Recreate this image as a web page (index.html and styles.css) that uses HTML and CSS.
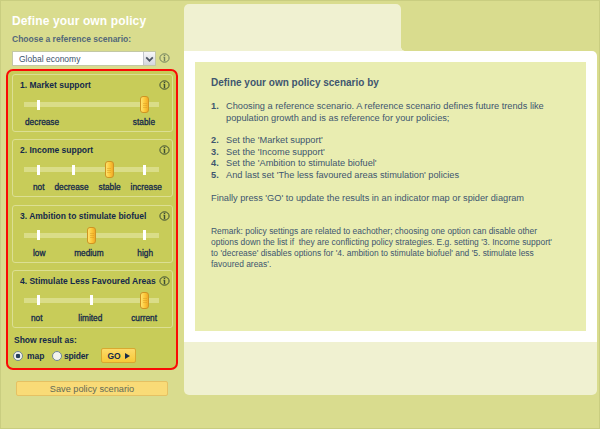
FILE: index.html
```html
<!DOCTYPE html>
<html lang="en">
<head>
<meta charset="utf-8">
<title>Define your own policy</title>
<link rel="stylesheet" href="styles.css">
</head>
<body>
<svg class="defs" aria-hidden="true">
  <symbol id="info" viewBox="0 0 11 10">
    <ellipse cx="5.5" cy="5" rx="4.6" ry="4.2" fill="none" stroke="currentColor" stroke-width="1"/>
    <path d="M4.8 1.8h1.4v1.2H4.8zM4.3 3.8h1.9v4.4H4.8V4.6h-.5z" fill="currentColor"/>
  </symbol>
</svg>
<div class="app">
  <aside class="sidebar">
    <h1>Define your own policy</h1>
    <p class="choose">Choose a reference scenario:</p>
    <div class="select-row">
      <div class="select"><span>Global economy</span><i><svg viewBox="0 0 10 12"><path d="M2 4.5l3 3 3-3" fill="none" stroke="#4d5665" stroke-width="1.6"/></svg></i></div>
      <svg class="info pale"><use href="#info"/></svg>
    </div>
    <form class="policies">
      <section class="group">
        <header><h2>1. Market support</h2><svg class="info"><use href="#info"/></svg></header>
        <div class="track"><b></b><b class="thumb"></b></div>
        <div class="labels l-market"><span>decrease</span><span>stable</span></div>
      </section>
      <section class="group">
        <header><h2>2. Income support</h2><svg class="info"><use href="#info"/></svg></header>
        <div class="track"><b></b><b></b><b class="thumb"></b><b></b></div>
        <div class="labels l-income"><span>not</span><span>decrease</span><span>stable</span><span>increase</span></div>
      </section>
      <section class="group">
        <header><h2>3. Ambition to stimulate biofuel</h2><svg class="info"><use href="#info"/></svg></header>
        <div class="track"><b></b><b class="thumb"></b><b></b></div>
        <div class="labels l-biofuel"><span>low</span><span>medium</span><span>high</span></div>
      </section>
      <section class="group">
        <header><h2>4. Stimulate Less Favoured Areas</h2><svg class="info"><use href="#info"/></svg></header>
        <div class="track"><b></b><b></b><b class="thumb"></b></div>
        <div class="labels l-areas"><span>not</span><span>limited</span><span>current</span></div>
      </section>
      <p class="show">Show result as:</p>
      <div class="result-row">
        <i class="radio on"></i><span class="map">map</span>
        <i class="radio"></i><span class="spider">spider</span>
        <div class="go"><span>GO</span><svg viewBox="0 0 5 6"><path d="M0 0l5 3-5 3z" fill="#1a2c48"/></svg></div>
      </div>
    </form>
    <div class="save">Save policy scenario</div>
  </aside>
  <main>
    <div class="tab"></div>
    <div class="panel">
      <article>
        <h3>Define your own policy scenario by</h3>
        <ol>
          <li class="first"><b>1.</b><span>Choosing a reference scenario. A reference scenario defines future trends like<br>population growth and is as reference for your policies;</span></li>
          <li><b>2.</b><span>Set the 'Market support'</span></li>
          <li><b>3.</b><span>Set the 'Income support'</span></li>
          <li><b>4.</b><span>Set the 'Ambition to stimulate biofuel'</span></li>
          <li><b>5.</b><span>And last set 'The less favoured areas stimulation' policies</span></li>
        </ol>
        <p class="finally">Finally press 'GO' to update the results in an indicator map or spider diagram</p>
        <p class="remark">Remark: policy settings are related to eachother; choosing one option can disable other<br>options down the list if &nbsp;they are conflicting policy strategies. E.g. setting '3. Income support'<br>to 'decrease' disables options for '4. ambition to stimulate biofuel' and '5. stimulate less<br>favoured areas'.</p>
      </article>
    </div>
    <div class="foot"></div>
  </main>
</div>
</body>
</html>
```

FILE: styles.css
```css
* { box-sizing: border-box; margin: 0; padding: 0; }
body { width: 600px; height: 429px; overflow: hidden; font-family: "Liberation Sans", Arial, sans-serif; }
.defs { display: none; }
.app { display: flex; width: 600px; height: 429px; background: #d9dc8e; border: 1px solid #c9cd80; }
.sidebar { width: 183px; padding-left: 5px; white-space: nowrap; }
h1 { font-size: 12px; line-height: 14px; margin: 13px 0 0 6px; color: #fff; letter-spacing: 0.13px; }
.choose { font-size: 8.5px; line-height: 10px; font-weight: bold; margin: 6px 0 0 6px; color: #53687a; }
.select-row { display: flex; align-items: center; height: 16px; margin: 6px 0 0 6px; }
.select { display: flex; width: 144px; height: 15px; background: #fff; border: 1px solid #c3c8a5; font-size: 8.5px; line-height: 14px; color: #3b526c; padding-left: 6px; justify-content: space-between; }
.select i { width: 12px; background: linear-gradient(#f7f7f9, #d4d6dd); border-left: 1px solid #c2c5cc; }
.select svg { display: block; width: 11px; height: 14px; }
.info { width: 11px; height: 10px; color: #3d4d33; flex: none; }
.pale { color: #71805e; margin-left: 3px; }
.policies { width: 172px; height: 301px; margin-top: 3px; border: 2px solid #fa0a05; border-radius: 7px; background: #c8cc59; padding: 3px 3px 0 4px; color: #14294a; }
.group { width: 161px; height: 58px; border: 1px solid #dcdf93; border-radius: 3px; margin-bottom: 7.3px; padding: 4px 2px 0 7px; }
header { display: flex; justify-content: space-between; align-items: center; height: 12px; }
h2 { font-size: 8.5px; line-height: 12px; }
.track { display: flex; justify-content: space-between; align-items: center; width: 135px; height: 5px; margin: 11px 0 0 4px; padding: 0 13px; background: #dadd88; }
.track b { width: 3px; height: 10px; background: #fff; }
.track .thumb { width: 9px; height: 17px; margin: 0 -3px; border: 1px solid #cf9422; border-radius: 3px; background: repeating-linear-gradient(#d8992000 0 1px, #d8992077 1px 2px) center / 4px 6px no-repeat, linear-gradient(90deg, #ffe36b, #fcc435 60%, #efaa29); }
.labels { display: flex; justify-content: space-between; font-size: 8.3px; line-height: 10px; margin-top: 10px; -webkit-text-stroke: 0.3px #14294a; }
.l-market { padding: 0 15px 0 5px; }
.l-income { padding: 0 8px 0 13px; }
.l-biofuel { padding: 0 17px 0 13px; }
.l-biofuel span:nth-child(2) { margin-right: 5px; }
.l-areas { padding: 0 13px 0 11px; }
.l-areas span:nth-child(2) { margin-left: 7px; }
.show { font-size: 8.5px; line-height: 10px; font-weight: bold; margin: 3px 0 0 2px; }
.result-row { display: flex; align-items: center; height: 15px; margin-top: 3px; font-size: 8.5px; font-weight: bold; }
.radio { width: 10px; height: 10px; margin-left: 1px; border: 1px solid #718497; border-radius: 50%; background: #f2f3ee; }
.radio.on { background: radial-gradient(circle, #253f5c 0 2px, #f2f3ee 2.6px); }
.map { width: 28px; padding-left: 4px; }
.spider { width: 35px; padding-left: 2px; letter-spacing: -0.2px; }
.go { display: flex; align-items: center; justify-content: center; gap: 4px; width: 35px; height: 15px; margin-left: 4px; border: 1px solid #d9a830; border-radius: 2px; background: linear-gradient(#fcda68, #f7c938); }
.go svg { width: 5px; height: 6px; }
.save { width: 152px; height: 15px; margin: 11px 0 0 10px; border: 1px solid #e5c163; border-radius: 2px; background: #f9db77; font-size: 9.2px; line-height: 14px; text-align: center; color: #626a58; }
main { width: 413px; padding-top: 3px; }
.tab { width: 217px; height: 47px; border-radius: 5px 5px 0 0; background: #f0f1d1; position: relative; }
.tab::after { content: ""; position: absolute; left: 100%; bottom: 0; width: 4px; height: 4px; background: radial-gradient(circle at 100% 0, transparent 3.5px, #f0f1d1 4px); }
.panel { height: 291px; padding: 11px; background: #fff; border-radius: 0 5px 0 0; }
article { height: 269px; padding: 15px 15px 0 16px; background: #e9edb1; color: #40566f; font-size: 9.22px; white-space: nowrap; }
h3 { font-size: 10px; line-height: 12px; }
ol { list-style: none; margin-top: 11px; }
li { display: flex; line-height: 11.5px; }
li b { width: 15px; }
.first { line-height: 12px; margin-bottom: 11px; }
.finally { line-height: 12px; margin-top: 11px; }
.remark { font-size: 8.45px; line-height: 11px; margin-top: 22px; }
.foot { height: 53px; background: #f0f1d1; border-radius: 0 0 5px 5px; }
```
